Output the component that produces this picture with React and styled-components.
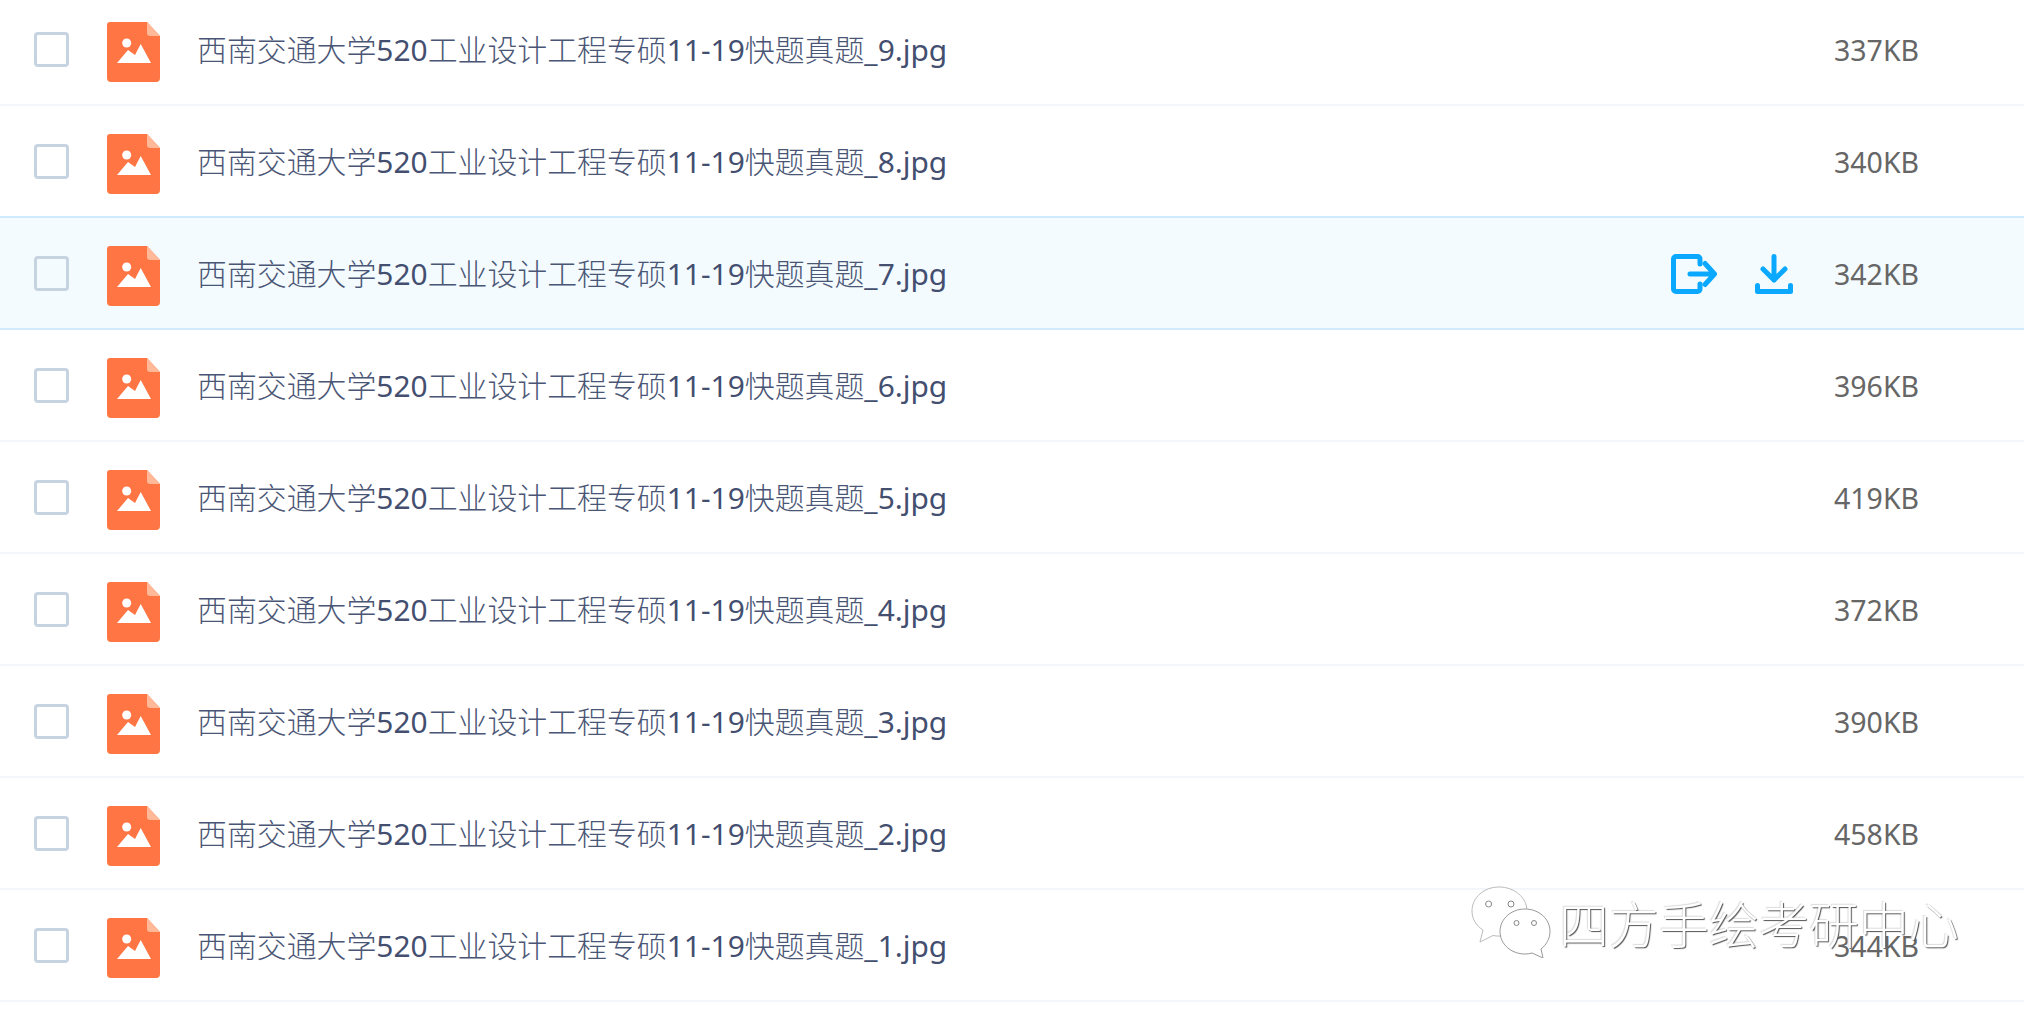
import React from 'react';
import styled, { createGlobalStyle } from 'styled-components';

const GlobalStyle = createGlobalStyle`
  html, body {
    margin: 0;
    padding: 0;
    height: 100%;
    overflow: hidden;
    background: #fff;
  }
`;

const Page = styled.div`
  position: relative;
  width: 2024px;
  height: 1012px;
  overflow: hidden;
  font-family: "Noto Sans", "Noto Sans CJK SC", sans-serif;
`;

const List = styled.ul`
  list-style: none;
  margin: -6px 0 0;
  padding: 0;
`;

const Row = styled.li`
  height: 112px;
  box-sizing: border-box;
  display: flex;
  align-items: center;
  padding: 0 0 2px 34px;
  border-bottom: 2px solid ${(p) => (p.$active ? '#d0eaff' : '#f3f6fa')};
  background: ${(p) => (p.$active ? '#f3fbff' : '#fff')};
  box-shadow: ${(p) => (p.$active ? '0 -2px 0 #d0eaff' : 'none')};
`;

const Check = styled.span`
  width: 35px;
  height: 35px;
  box-sizing: border-box;
  flex: none;
  margin: 2px 38px 0 0;
  border: 3px solid #c6d3e1;
  border-radius: 4px;
`;

const FileIcon = styled.svg`
  width: 53px;
  height: 60px;
  flex: none;
  margin: 8px 37px 0 0;
`;

const Name = styled.span`
  flex: 1;
  font-size: 29.9px;
  font-weight: 300;
  color: #4a5675;
  white-space: nowrap;
`;

const Latin = styled.span`
  font-weight: 400;
  color: #444f70;
`;

const Actions = styled.div`
  display: flex;
  align-items: center;
  gap: 38px;
  margin: 4px 41px 0 0;
`;

const ActionIcon = styled.svg`
  height: 40px;
  flex: none;
  fill: none;
  stroke: #0aa9ff;
  stroke-width: 5;
  stroke-linecap: round;
  stroke-linejoin: round;
`;

const Size = styled.span`
  width: 190px;
  flex: none;
  margin-top: 4px;
  font-size: 28.5px;
  color: #666;
`;

const Watermark = styled.div`
  position: absolute;
  left: 1471px;
  top: 886px;
  display: flex;
  align-items: center;
  gap: 8px;
  pointer-events: none;
`;

const WatermarkText = styled.span`
  font-family: "Noto Sans CJK SC", sans-serif;
  font-size: 50px;
  font-weight: 300;
  line-height: 72px;
  color: #fff;
  text-shadow: 1px 1px 1px #555, -1px -1px 1px #ddd;
  white-space: nowrap;
`;

const files = [
  { index: 9, size: '337KB' },
  { index: 8, size: '340KB' },
  { index: 7, size: '342KB', active: true },
  { index: 6, size: '396KB' },
  { index: 5, size: '419KB' },
  { index: 4, size: '372KB' },
  { index: 3, size: '390KB' },
  { index: 2, size: '458KB' },
  { index: 1, size: '344KB' },
];

const ImageFile = () => (
  <FileIcon viewBox="0 0 53 60">
    <path
      d="M3 0H40L53 14V56a4 4 0 0 1-4 4H4a4 4 0 0 1-4-4V3a3 3 0 0 1 3-3Z"
      fill="#ff7644"
    />
    <path d="M40 0L53 14H43a3 3 0 0 1-3-3Z" fill="#ffb898" />
    <circle cx="19.7" cy="21" r="4.500" fill="#fff" />
    <path d="M10 41L21 28L28 33L33.7 22L44 41Z" fill="#fff" />
  </FileIcon>
);

const MoveIcon = () => (
  <ActionIcon viewBox="0 0 46 40" width="46">
    <path d="M29 10V5a2.5 2.5 0 0 0-2.5-2.5H5A2.5 2.5 0 0 0 2.5 5v30A2.5 2.5 0 0 0 5 37.500h21.500A2.500 2.500 0 0 0 29 35v-5" />
    <path d="M19 20H43M34 9.500L43.500 20L34 30.500" />
  </ActionIcon>
);

const DownloadIcon = () => (
  <ActionIcon viewBox="0 0 38 40" width="38">
    <path d="M19 2.500V26M8 15L19 26L30 15" />
    <path d="M2.500 31.500V37.500H35.500V31.500" />
  </ActionIcon>
);

const WeChat = () => (
  <svg width="80" height="72" viewBox="0 0 80 72">
    <path
      d="M28 1C13 1 1 11.500 1 25c0 8 4 14.500 11 19L9 56l13-6.500c2 .4 4 .6 6 .6 15 0 28-11 28-25S43 1 28 1Z"
      fill="#fff"
      stroke="#bbb"
    />
    <path
      d="M54 23c-14 0-25 10-25 22.500S40 68 54 68c2.500 0 5-.3 7-1l11 5-2-9c5-4 9-10 9-17.500C79 33 68 23 54 23Z"
      fill="#fff"
      stroke="#999"
    />
    <g fill="#fff" stroke="#888">
      <circle cx="17.600" cy="18" r="3" />
      <circle cx="40" cy="18" r="3" />
      <circle cx="45.500" cy="37" r="2.500" />
      <circle cx="63" cy="37" r="2.500" />
    </g>
  </svg>
);

export default function App() {
  return (
    <Page>
      <GlobalStyle />
      <List>
        {files.map((file) => (
          <Row key={file.index} $active={file.active}>
            <Check />
            <ImageFile />
            <Name>
              西南交通大学<Latin>520</Latin>工业设计工程专硕<Latin>11-19</Latin>快题真题<Latin>_{file.index}.jpg</Latin>
            </Name>
            {file.active && (
              <Actions>
                <MoveIcon />
                <DownloadIcon />
              </Actions>
            )}
            <Size>{file.size}</Size>
          </Row>
        ))}
      </List>
      <Watermark>
        <WeChat />
        <WatermarkText>四方手绘考研中心</WatermarkText>
      </Watermark>
    </Page>
  );
}
